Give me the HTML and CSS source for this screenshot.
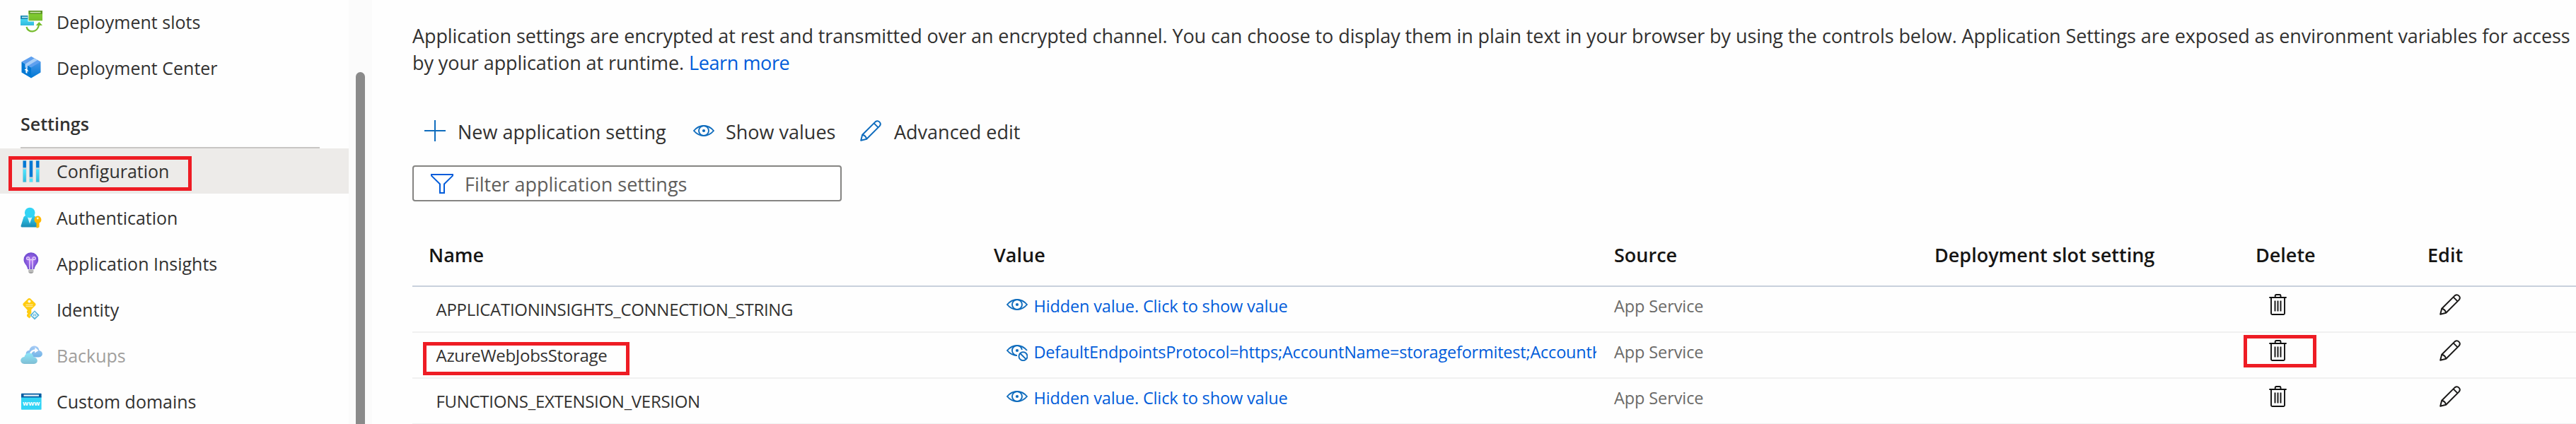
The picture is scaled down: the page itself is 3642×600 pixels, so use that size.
FILE: index.html
```
<!DOCTYPE html>
<html lang="en">
<head>
<meta charset="utf-8">
<title>Configuration</title>
<link rel="stylesheet" href="styles.css">
</head>
<body>
<svg class="defs" aria-hidden="true">
  <defs>
    <linearGradient id="g-cyan" x1="0" y1="0" x2="0" y2="1"><stop offset="0" stop-color="#50e6ff"/><stop offset="1" stop-color="#32b9dc"/></linearGradient>
    <linearGradient id="g-person" x1="0" y1="0" x2="0" y2="1"><stop offset="0" stop-color="#32d4f5"/><stop offset="1" stop-color="#198ab3"/></linearGradient>
    <linearGradient id="g-green" x1="0" y1="0" x2="0" y2="1"><stop offset="0" stop-color="#86d633"/><stop offset="1" stop-color="#76bc2d"/></linearGradient>
    <linearGradient id="g-blue" x1="0" y1="0" x2="0" y2="1"><stop offset="0" stop-color="#5ea0ef"/><stop offset="1" stop-color="#0078d4"/></linearGradient>
    <radialGradient id="g-purple"><stop offset="0" stop-color="#b77af4"/><stop offset="1" stop-color="#6f4bd0"/></radialGradient>
    <symbol id="eye" viewBox="0 0 30 30"><g fill="none" stroke="#0f6cbd" stroke-width="1.9"><path d="M1 15C5 10.200 9.500 8 15 8s10 2.200 14 7c-4 4.800-8.500 7-14 7S5 19.800 1 15z"/><circle cx="15" cy="15" r="7"/></g><circle cx="15" cy="15" r="2.100" fill="#0f6cbd"/></symbol>
    <symbol id="eye-off" viewBox="0 0 30 30"><g fill="none" stroke="#0f6cbd" stroke-width="1.900"><path d="M15 22C9.500 22 5 19.800 1 15C5 10.200 9.500 8 15 8c5.500 0 10 2.200 14 7"/><path d="M14 21.900A7 7 0 1 1 21.900 14"/><circle cx="23.500" cy="23.200" r="6"/><path d="M19.300 19l8.400 8.400"/></g><circle cx="15" cy="15" r="2.100" fill="#0f6cbd"/></symbol>
    <symbol id="pencil" viewBox="0 0 30 30"><g fill="none" stroke="currentColor" stroke-width="2" stroke-linejoin="round"><path d="M1.200 28.800L3.200 20.800L21.600 2.400C25.800-.800 31 4.200 27.600 8.400L9.200 26.800z"/><path d="M3.200 20.800c3 .600 5.400 3 6 6M19.600 4.400l6 6"/></g></symbol>
    <symbol id="trash" viewBox="0 0 25 30"><g fill="none" stroke="#111" stroke-width="1.900"><path d="M.300 5H24.700M3 5V27.500Q3 29 4.500 29H20.500Q22 29 22 27.500V5M8.700 5V2.400Q8.700 1 10.200 1H15Q16.500 1 16.500 2.400V5"/><path d="M8.500 9.500V24.500M12.500 9.500V24.500M16.500 9.500V24.500"/></g></symbol>
  </defs>
</svg>

<nav class="sidebar">
  <a class="nav-item nav-item--first">
    <svg class="nav-icon" viewBox="0 0 31 31"><path fill="url(#g-cyan)" d="M0 7h19v14H0z"/><path fill="#198ab3" d="M0 7h11v5H0z"/><path stroke="#c9eef8" stroke-width="1.500" d="M2 9.500h8"/><path fill="#fff" d="M10.500 0H31v15.500H10.500z"/><path fill="url(#g-green)" d="M11.500 0H31v14.300H11.500z"/><path fill="#5e9624" d="M11.500 0H31v4.800H11.500z"/><path stroke="#d5ebbf" stroke-width="1.500" d="M13.500 2.500h15"/><path fill="none" stroke="#76bc2d" stroke-width="2.200" d="M8.500 23c1.500 9 16 9 17.500-3"/><path fill="#76bc2d" d="M26.300 16l4.700 5h-9.300z"/></svg>
    <span>Deployment slots</span>
  </a>
  <a class="nav-item">
    <svg class="nav-icon" viewBox="0 0 31 31"><path fill="url(#g-blue)" d="M15 0l13.500 7.500v15L15 30.500z"/><path fill="#5ea0ef" d="M15 0l13.500 7.500L15 15.500L1.500 7.500z"/><path fill="#0078d4" d="M1.500 7.500L15 15.500v15L1.500 22.500z"/><path fill="#a9cff8" d="M19.500 2.600l4.500 2.500-14 8.400v4l-3.500-2v-4.700z"/><path fill="#fff" d="M8.600 16.200l2.900 5.200-2.100-.800v3.400l-2-1.100v-3.300l-2-.600z"/></svg>
    <span>Deployment Center</span>
  </a>
  <h2 class="nav-heading">Settings</h2>
  <a class="nav-item nav-item--selected">
    <svg class="nav-icon" viewBox="0 0 31 31"><path fill="#c9d6dc" d="M3 0h5.600v31H3zM12.200 0h5.600v31h-5.600zM21.500 0h5.600v31h-5.600z"/><path fill="#0078d4" d="M3.600 .600h4.300v9.600H3.600zM12.800 .600h4.300v23h-4.300zM22.100 .600h4.300v9.600h-4.300z"/><path fill="url(#g-cyan)" d="M3.600 12.400h4.300v18H3.600zM22.100 12.400h4.300v18h-4.300z"/><path fill="#50e6ff" d="M12.800 25.600h4.300v4.800h-4.300z"/></svg>
    <span>Configuration</span>
  </a>
  <a class="nav-item">
    <svg class="nav-icon" viewBox="0 0 31 31"><path fill="url(#g-person)" d="M4.500 15Q6 12.500 9 12.500h8Q20 12.500 21.500 15L26 29.500H2Q.200 29.500 .600 27.500z"/><path fill="#d8f4fb" d="M9 12.500h8.500L13 24.500z"/><circle cx="13.200" cy="9" r="7.300" fill="#32d4f5"/><path fill="#ffb900" d="M24.300 13.600a5.300 5.300 0 0 1 2.200 10v5.600l-2 1.400h-2v-7a5.300 5.300 0 0 1 1.800-10z"/><circle cx="24.300" cy="17" r="1.400" fill="#fff3cf"/></svg>
    <span>Authentication</span>
  </a>
  <a class="nav-item">
    <svg class="nav-icon" viewBox="0 0 31 31"><path fill="url(#g-purple)" d="M14.800 .300A10.300 10.300 0 0 1 25.200 10.700C25.200 16 20.300 18 19.500 24H10.300C9.500 18 4.500 16 4.500 10.700A10.300 10.300 0 0 1 14.800 .300z"/><path fill="none" stroke="#e3cdfb" stroke-width="1.500" d="M12.800 24V10.500M17 24V10.500M11 10.500h7.800"/><g fill="none" stroke="#e3cdfb" stroke-width="1.500"><circle cx="10.600" cy="8.600" r="1.900"/><circle cx="19.200" cy="8.600" r="1.900"/></g><path fill="#a6a6a6" d="M11.300 24.500h7v3.800l-2 1.700h-3l-2-1.700z"/><path stroke="#d5d5d5" d="M11.300 26.500h7"/></svg>
    <span>Application Insights</span>
  </a>
  <a class="nav-item">
    <svg class="nav-icon" viewBox="0 0 31 31"><path fill="#fc1" d="M11 .300Q12.300-.300 13.700 .300L21 7.200Q22 8.700 21 10.200L15.300 16v9.500L12.500 28.500 9 25.500v-2.200l1.500-1.600L9 20.200v-2l1-1-1-1.200L3.800 10.200Q3 8.700 3.800 7.200z"/><circle cx="12.400" cy="4.500" r="2" fill="#fffbe8"/><path stroke="#ffe79a" stroke-width="1.200" d="M7.500 9.300h10M7.500 11.700h10"/><path fill="#59b4d9" stroke="#fff" stroke-width=".6" d="M20 17l7 6.900-7 6.900-7-6.900z"/><path fill="none" stroke="#e3f4fb" stroke-width="1.200" d="M20 19.500v8.500M20 20l-3.500 4.300 3.500 2.500 3.500-2.500z"/></svg>
    <span>Identity</span>
  </a>
  <a class="nav-item nav-item--disabled">
    <svg class="nav-icon" viewBox="0 0 31 31"><path fill="url(#g-blue)" d="M13 18.500C6 18 6 9 12.500 8.800 14 .500 25.500 .500 26.500 9 32.500 10 32.500 18 26 18.500z"/><path fill="none" stroke="#fff" stroke-width="2.600" d="M14 14c1-4.500 4-5.500 8-5.500"/><path fill="#fff" d="M20.500 4.500l5 4.500-5.500 3.500z"/><path fill="url(#g-person)" d="M5.500 28C-1.500 27.700-1.500 18.500 5.500 18 7 10.500 17.500 10.500 18.500 18.500 25.500 19 25.500 27.700 19 28z"/></svg>
    <span>Backups</span>
  </a>
  <a class="nav-item">
    <svg class="nav-icon" viewBox="0 0 31 31"><path fill="#32d4f5" d="M1 9h28.600v18q0 .700-.700 .700H1.700Q1 27.700 1 27z"/><path fill="#005ba1" d="M1.700 4.800h27.200q.700 0 .700 .700V10.500H1V5.500q0-.700 .700-.700z"/><path fill="#e6f0f8" d="M4.500 6.500h21.500v2.300H4.500z"/><text class="www" x="15.300" y="21.500">www</text></svg>
    <span>Custom domains</span>
  </a>
  <span class="callout callout--configuration"></span>
</nav>

<div class="scroll-track"><div class="scroll-thumb"></div></div>

<main class="content">
  <p class="intro">Application settings are encrypted at rest and transmitted over an encrypted channel. You can choose to display them in plain text in your browser by using the controls below. Application Settings are exposed as environment variables for access<br>by your application at runtime. <a class="link">Learn more</a></p>

  <div class="toolbar">
    <button class="tool tool--new"><svg class="tool-icon" viewBox="0 0 30 30"><path stroke="#0f6cbd" stroke-width="2" d="M15 0v30M0 15h30"/></svg>New application setting</button>
    <button class="tool tool--show"><svg class="tool-icon"><use href="#eye"/></svg>Show values</button>
    <button class="tool tool--edit"><svg class="tool-icon"><use href="#pencil"/></svg>Advanced edit</button>
  </div>

  <div class="filter">
    <svg class="filter-icon" viewBox="0 0 32 28"><path fill="none" stroke="#015cda" stroke-width="2" d="M1 1h30v1.600L19 14.500V27h-6V14.500L1 2.600z"/></svg>
    <span class="filter-label">Filter application settings</span>
  </div>

  <div class="table">
    <div class="row row--head"><span class="head-name">Name</span><span>Value</span><span>Source</span><span>Deployment slot setting</span><span>Delete</span><span>Edit</span></div>
    <div class="row">
      <span class="name">APPLICATIONINSIGHTS_CONNECTION_STRING</span>
      <span class="value"><svg class="value-icon"><use href="#eye"/></svg>Hidden value. Click to show value</span>
      <span class="source">App Service</span><span></span>
      <span class="delete"><svg class="trash"><use href="#trash"/></svg></span>
      <span class="edit"><svg class="pencil"><use href="#pencil"/></svg></span>
    </div>
    <div class="row">
      <span class="name">AzureWebJobsStorage</span>
      <span class="value value--shown"><svg class="value-icon"><use href="#eye-off"/></svg>DefaultEndpointsProtocol=https;AccountName=storageformitest;AccountK</span>
      <span class="source">App Service</span><span></span>
      <span class="delete"><svg class="trash"><use href="#trash"/></svg></span>
      <span class="edit"><svg class="pencil"><use href="#pencil"/></svg></span>
      <i class="callout callout--name"></i><i class="callout callout--delete"></i>
    </div>
    <div class="row">
      <span class="name">FUNCTIONS_EXTENSION_VERSION</span>
      <span class="value"><svg class="value-icon"><use href="#eye"/></svg>Hidden value. Click to show value</span>
      <span class="source">App Service</span><span></span>
      <span class="delete"><svg class="trash"><use href="#trash"/></svg></span>
      <span class="edit"><svg class="pencil"><use href="#pencil"/></svg></span>
    </div>
  </div>
</main>
</body>
</html>
```
FILE: styles.css
```
* { box-sizing: border-box; }

body {
  display: grid;
  grid-template-columns: 493px 33px 1fr;
  height: 600px;
  margin: 0;
  overflow: hidden;
  background: #fefefe;
  color: #323130;
  font-family: "Open Sans", "Noto Sans", sans-serif;
}

.defs { position: absolute; width: 0; height: 0; }

/* Sidebar */
.sidebar { position: relative; font-size: 25px; }
.nav-item {
  display: flex;
  align-items: center;
  gap: 20px;
  height: 65px;
  padding-left: 29px;
}
.nav-item--first { height: 61px; margin-bottom: 2px; }
.nav-item--selected { height: 64px; margin-bottom: 1px; background: #edebe9; }
.nav-item--disabled span { color: #a19f9d; }
.nav-item--disabled .nav-icon { opacity: 0.55; }
.nav-icon { flex: none; width: 31px; height: 31px; }
.nav-heading {
  height: 82px;
  margin: 0 41px 0 29px;
  padding-top: 28px;
  border-bottom: 2px solid #c8c6c4;
  font-size: 25px;
  font-weight: 600;
  line-height: 38px;
}
.www { fill: #fff; font: 700 9.5px "Open Sans", sans-serif; text-anchor: middle; }

.scroll-track { padding: 102px 0 0 10px; background: #fbfbfb; }
.scroll-thumb { width: 13px; height: 520px; border-radius: 7px 7px 0 0; background: #8a8a8a; }

/* Content */
.content { padding: 32px 0 0 57px; overflow: hidden; font-size: 27px; }
.intro { margin: 0; line-height: 38px; letter-spacing: -0.087px; white-space: nowrap; }
.link { color: #015cda; letter-spacing: -0.4px; }

.toolbar { display: flex; align-items: center; height: 60px; margin: 48px 0 0 17px; }
.tool {
  display: flex;
  align-items: center;
  gap: 17px;
  padding: 0;
  border: 0;
  background: none;
  color: inherit;
  font: inherit;
  white-space: nowrap;
}
.tool--new { width: 380px; }
.tool--show { width: 236px; gap: 16px; }
.tool--edit { gap: 18px; }
.tool-icon { width: 30px; height: 30px; margin-bottom: 2px; color: #0f6cbd; }

.filter {
  display: flex;
  align-items: center;
  gap: 16px;
  width: 607px;
  height: 51px;
  margin-top: 18px;
  padding: 0 24px;
  border: 2px solid #858482;
  border-radius: 4px;
  background: #fff;
  color: #605e5c;
}
.filter-icon { width: 32px; height: 28px; }
.filter-label { padding-top: 2px; }

.table { margin-top: 31px; }
.row {
  position: relative;
  display: grid;
  grid-template-columns: 822px 877px 453px 454px 243px 1fr;
  align-items: center;
  height: 65px;
  border-bottom: 2px solid #f1f1f1;
  font-size: 23.5px;
  white-space: nowrap;
}
.row--head {
  height: 90px;
  border-bottom-color: #c8d1dc;
  color: #161514;
  font-size: 27px;
  font-weight: 600;
}
.head-name { padding-left: 23px; }
.name { padding-left: 33.5px; font-size: 24px; letter-spacing: -0.3px; }
.value {
  display: flex;
  align-items: center;
  gap: 8.5px;
  height: 63px;
  margin-right: 25px;
  padding: 0 0 9px 18px;
  overflow: hidden;
  color: #015cda;
  letter-spacing: -0.14px;
}
.value--shown { letter-spacing: -0.22px; }
.value-icon { flex: none; width: 30px; height: 30px; margin-bottom: 4px; }
.source { padding-bottom: 9px; color: #6b6a68; letter-spacing: -0.1px; }
.delete, .edit { display: flex; padding-bottom: 13px; }
.delete { padding-left: 19px; }
.edit { padding-left: 17px; color: #1b1a19; }
.trash { width: 25px; height: 30px; }
.pencil { width: 30px; height: 30px; }

/* Highlight frames over the content */
.callout { position: absolute; border: 5px solid #ee1c24; }
.callout--configuration { left: 12px; top: 221px; width: 259px; height: 49px; }
.callout--name { left: 15px; top: 13px; width: 292px; height: 47px; }
.callout--delete { left: 2589px; top: 3px; width: 103px; height: 46px; }
```
